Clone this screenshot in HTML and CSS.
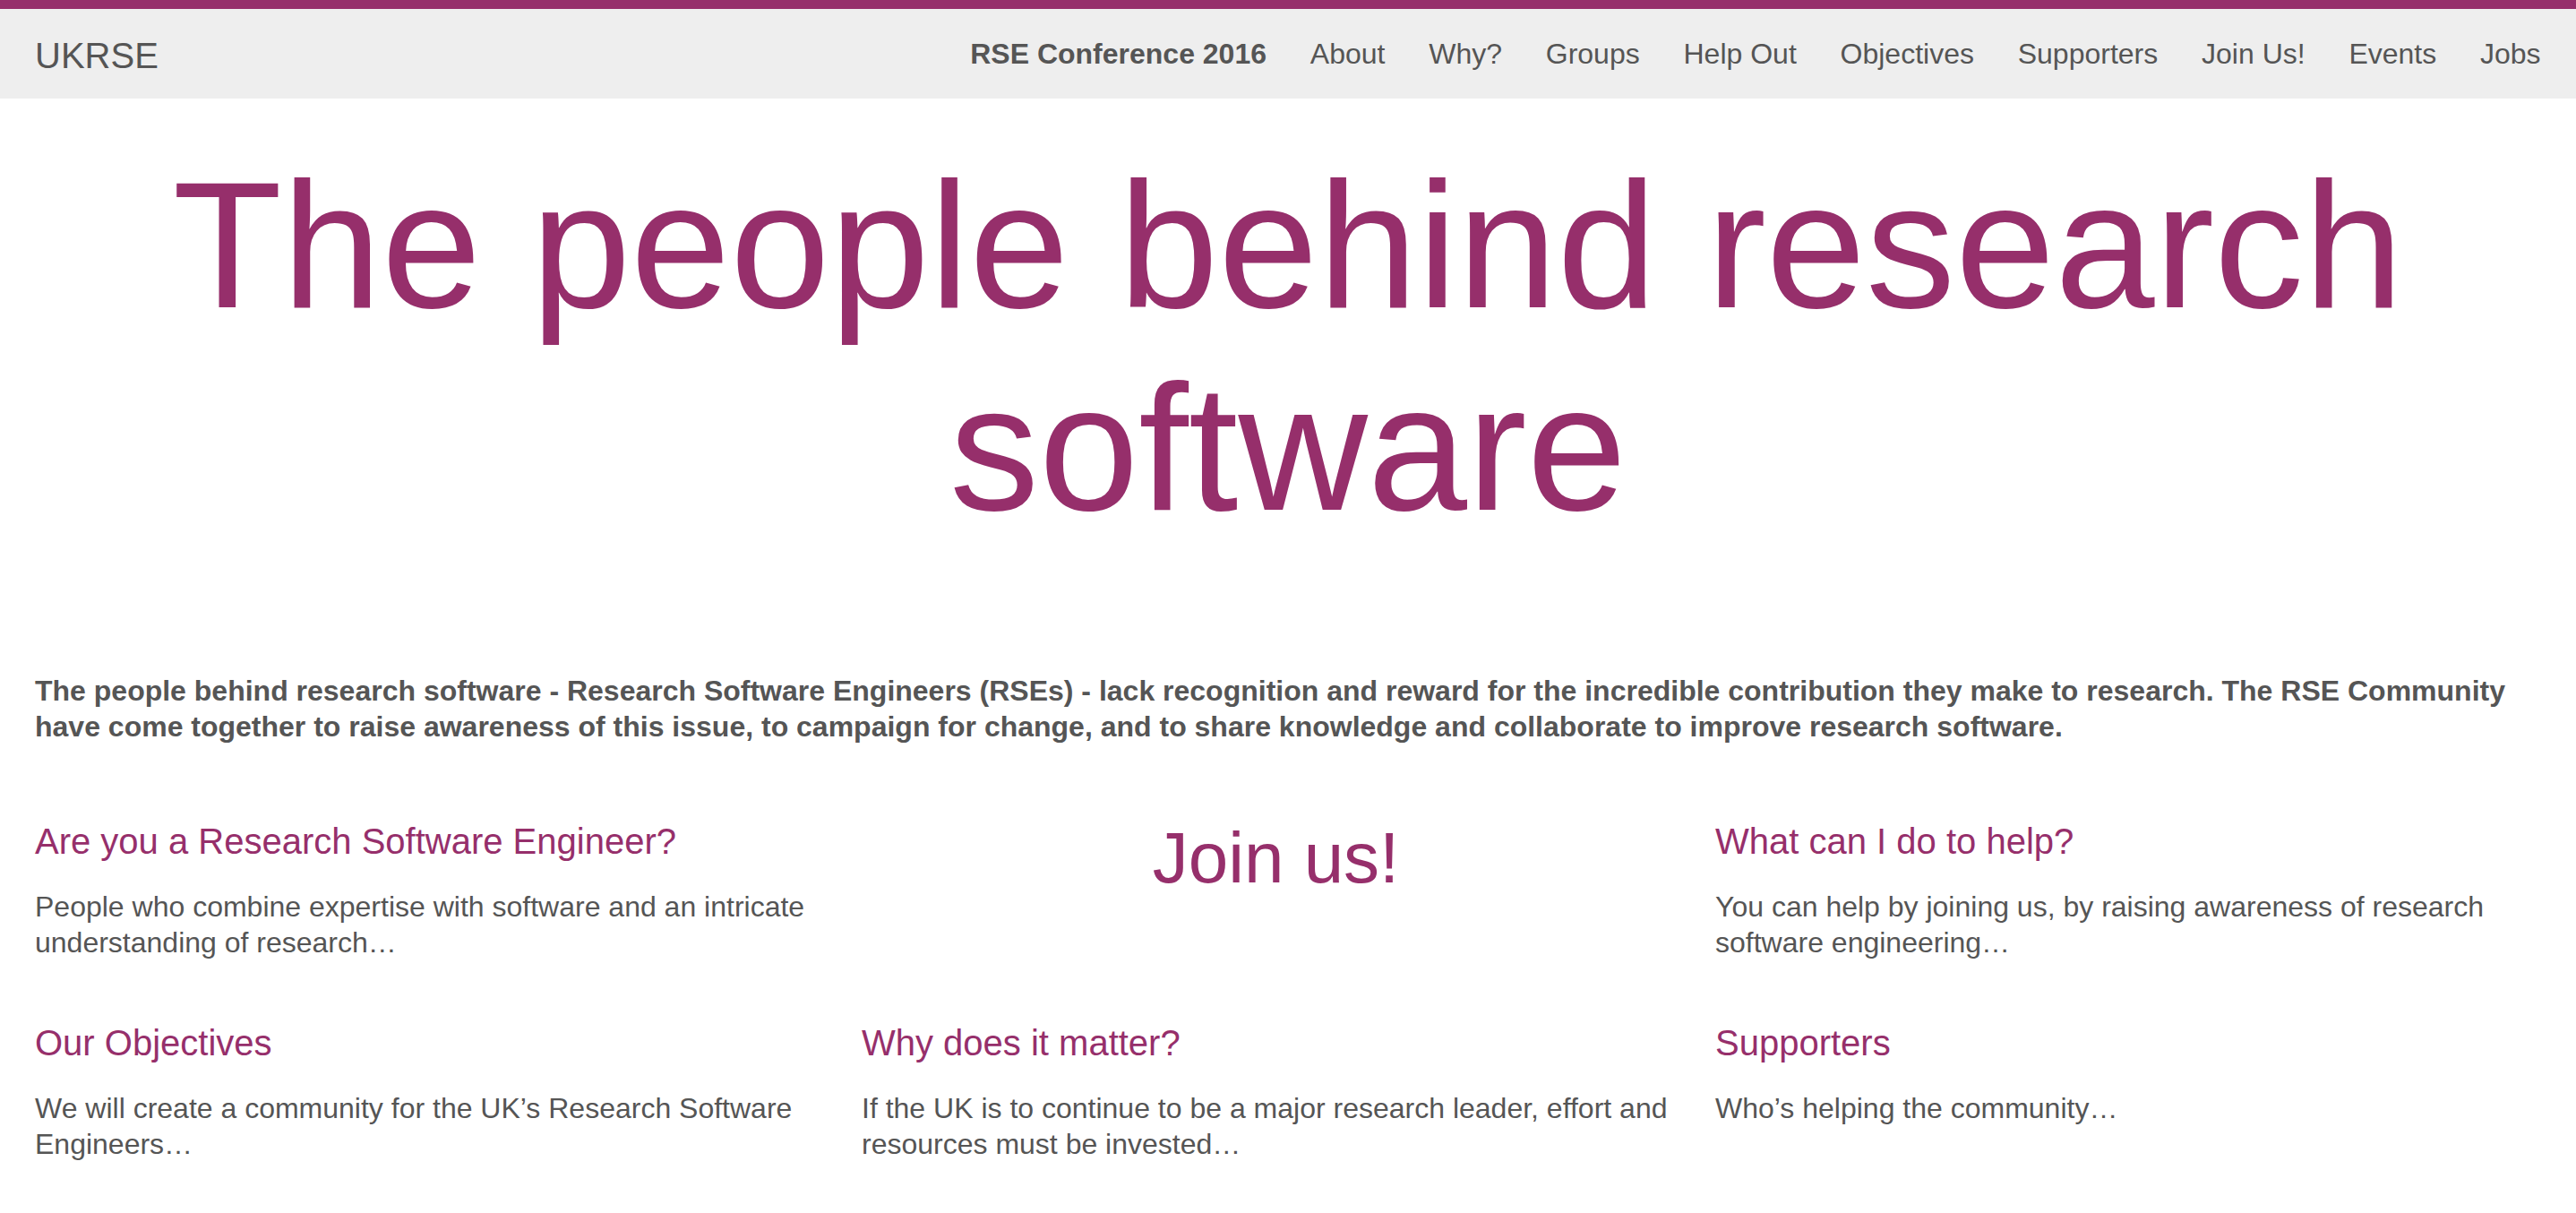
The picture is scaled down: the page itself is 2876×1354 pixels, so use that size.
FILE: index.html
```html
<!DOCTYPE html>
<html lang="en">
<head>
<meta charset="utf-8">
<title>UKRSE</title>
<link rel="stylesheet" href="styles.css">
</head>
<body>
<div class="topbar"></div>
<nav class="navbar">
  <a class="brand" href="#">UKRSE</a>
  <ul class="nav">
    <li><a class="nav-strong" href="#">RSE Conference 2016</a></li>
    <li><a href="#">About</a></li>
    <li><a href="#">Why?</a></li>
    <li><a href="#">Groups</a></li>
    <li><a href="#">Help Out</a></li>
    <li><a href="#">Objectives</a></li>
    <li><a href="#">Supporters</a></li>
    <li><a href="#">Join Us!</a></li>
    <li><a href="#">Events</a></li>
    <li><a href="#">Jobs</a></li>
  </ul>
</nav>
<main class="page">
  <h1 class="hero">The people behind research software</h1>
  <p class="lead">The people behind research software - Research Software Engineers (RSEs) - lack recognition and reward for the incredible contribution they make to research. The RSE Community have come together to raise awareness of this issue, to campaign for change, and to share knowledge and collaborate to improve research software.</p>
  <section class="grid">
    <div class="card">
      <h2 class="card-title">Are you a Research Software Engineer?</h2>
      <p class="card-text">People who combine expertise with software and an intricate understanding of research…</p>
    </div>
    <div class="card card-join">
      <a class="join" href="#">Join us!</a>
    </div>
    <div class="card">
      <h2 class="card-title">What can I do to help?</h2>
      <p class="card-text">You can help by joining us, by raising awareness of research software engineering…</p>
    </div>
    <div class="card">
      <h2 class="card-title">Our Objectives</h2>
      <p class="card-text">We will create a community for the UK’s Research Software Engineers…</p>
    </div>
    <div class="card">
      <h2 class="card-title">Why does it matter?</h2>
      <p class="card-text">If the UK is to continue to be a major research leader, effort and resources must be invested…</p>
    </div>
    <div class="card">
      <h2 class="card-title">Supporters</h2>
      <p class="card-text">Who’s helping the community…</p>
    </div>
  </section>
</main>
</body>
</html>
```

FILE: styles.css
```css
* { box-sizing: border-box; }

html, body {
  margin: 0;
  padding: 0;
  background: #ffffff;
}

body {
  font-family: "Liberation Sans", Arial, Helvetica, sans-serif;
  color: #555555;
}

a { text-decoration: none; }

.topbar {
  height: 10px;
  background: #962f6b;
}

.navbar {
  height: 100px;
  background: #eeeeee;
  display: flex;
  align-items: center;
  padding: 0 15px;
}

.brand {
  font-size: 40px;
  line-height: 48px;
  color: #555555;
  padding: 0 24px;
  margin-top: 4px;
}

.nav {
  list-style: none;
  margin: 0 0 0 auto;
  padding: 0;
  display: flex;
}

.nav a {
  display: block;
  font-size: 32px;
  line-height: 40px;
  color: #555555;
  padding: 0 24.4px;
}

.nav a.nav-strong {
  font-weight: bold;
}

.page {
  padding: 0 39px;
}

.hero {
  margin: 51px 0 138px;
  font-size: 200px;
  line-height: 226px;
  font-weight: normal;
  text-align: center;
  color: #962f6b;
}

.lead {
  margin: 0;
  font-size: 32px;
  line-height: 40px;
  font-weight: bold;
}

.grid {
  margin-top: 84px;
  display: grid;
  grid-template-columns: 895px 925px 1fr;
  column-gap: 28px;
  row-gap: 68px;
}

.card-title {
  margin: 0 0 29px;
  font-size: 40px;
  line-height: 48px;
  font-weight: normal;
  color: #962f6b;
}

.card-text {
  margin: 0;
  font-size: 32px;
  line-height: 40px;
}

.card-join {
  text-align: center;
}

.join {
  display: block;
  margin-top: 3px;
  font-size: 80px;
  line-height: 80px;
  color: #962f6b;
}
```
